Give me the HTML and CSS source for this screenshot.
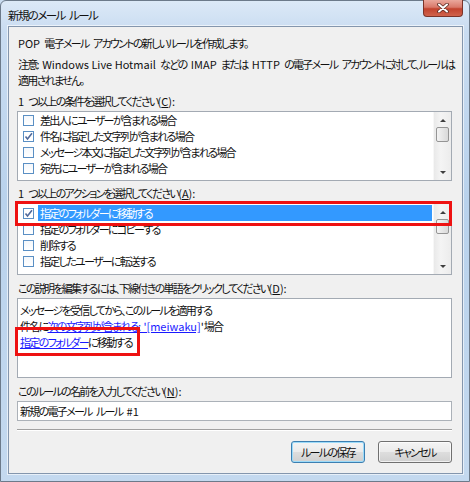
FILE: index.html
```
<html>
    <head>
        <meta charset="utf-8">
        <link rel="stylesheet" href="styles.css">
    </head>
    <body>
        <div class="window">
            <div class="titlebar">
                <span class="title">新規のメール ルール</span>
                <div class="close">
                    <svg width="12" height="10" viewBox="0 0 12 10">
                        <path d="M2 1.5 L10 8.5 M10 1.5 L2 8.5" stroke="#5a2a22" stroke-width="3.6" stroke-linecap="round"/>
                        <path d="M2 1.5 L10 8.5 M10 1.5 L2 8.5" stroke="#fff" stroke-width="2" stroke-linecap="round"/>
                    </svg>
                </div>
            </div>
            <div class="panel">
                <p class="intro"><span class="en">POP</span> 電子メール アカウントの新しいルールを作成します。</p>
                <p class="note">注意<span class="en">: Windows Live Hotmail</span> などの <span class="en">IMAP</span> または <span class="en">HTTP</span> の電子メール アカウントに対して、ルールは<br>適用されません。</p>

                <div class="label"><span class="en">1</span> つ以上の条件を選択してください<span class="en">(<u>C</u>):</span></div>
                <div class="listbox conditions">
                    <ul class="items">
                        <li><span class="check"></span><span class="text">差出人にユーザーが含まれる場合</span></li>
                        <li><span class="check checked"></span><span class="text">件名に指定した文字列が含まれる場合</span></li>
                        <li><span class="check"></span><span class="text">メッセージ本文に指定した文字列が含まれる場合</span></li>
                        <li><span class="check"></span><span class="text">宛先にユーザーが含まれる場合</span></li>
                    </ul>
                    <div class="scrollbar">
                        <span class="arrow up"></span>
                        <span class="thumb"></span>
                        <span class="arrow down"></span>
                    </div>
                </div>

                <div class="label label-action"><span class="en">1</span> つ以上のアクションを選択してください<span class="en">(<u>A</u>):</span></div>
                <div class="listbox actions">
                    <ul class="items">
                        <li class="selected"><span class="check checked"></span><span class="text">指定のフォルダーに移動する</span></li>
                        <li><span class="check"></span><span class="text">指定のフォルダーにコピーする</span></li>
                        <li><span class="check"></span><span class="text">削除する</span></li>
                        <li><span class="check"></span><span class="text">指定したユーザーに転送する</span></li>
                    </ul>
                    <div class="scrollbar">
                        <span class="arrow up"></span>
                        <span class="thumb"></span>
                        <span class="arrow down"></span>
                    </div>
                    <div class="mark mark-action"></div>
                </div>

                <div class="label">この説明を編集するには、下線付きの単語をクリックしてください<span class="en">(<u>D</u>):</span></div>
                <div class="description">
                    <div class="line">メッセージを受信してから、このルールを適用する</div>
                    <div class="line">件名に<a href="#">次の文字列が含まれる<span class="en">: '[meiwaku]</span></a><span class="en">'</span>場合</div>
                    <div class="line"><a href="#">指定のフォルダー</a>に移動する</div>
                    <div class="mark mark-folder"></div>
                </div>

                <div class="label">このルールの名前を入力してください<span class="en">(<u>N</u>):</span></div>
                <div class="input">新規の電子メール ルール <span class="en">#1</span></div>

                <div class="separator"></div>

                <div class="buttons">
                    <div class="button default">ルールの保存</div>
                    <div class="button">キャンセル</div>
                </div>
            </div>
        </div>
    </body>
</html>
```

FILE: styles.css
```
body{
    margin: 0;
    font-family: "Noto Sans CJK JP", "Noto Sans", sans-serif;
    font-size: 11px;
    letter-spacing: -1.7px;
    word-spacing: 3.5px;
    font-feature-settings: "palt";
    color: #111;
    background: #c9dcf0;
}

.en{
    font-size: 11px;
    line-height: 1;
    letter-spacing: 0;
    word-spacing: 0;
}

.window{
    box-sizing: border-box;
    width: 470px;
    height: 482px;
    border: 1px solid #6c7a8a;
    border-radius: 6px 6px 0 0;
    background: linear-gradient(180deg, #dce9f7 0px, #c9dcf1 30px, #b9d2ec 200px, #c4d9ef 482px);
    display: flex;
    flex-direction: column;
}

.titlebar{
    height: 25px;
    display: flex;
    align-items: flex-start;
    justify-content: space-between;
}

.title{
    margin: 6px 0 0 7px;
    line-height: 16px;
    font-size: 11.5px;
    letter-spacing: -1.6px;
    color: #111;
}

.close{
    width: 40px;
    height: 17px;
    margin-right: 6px;
    margin-top: -1px;
    box-sizing: border-box;
    border: 1px solid #7b3328;
    border-top: none;
    border-radius: 0 0 4px 4px;
    background: linear-gradient(180deg, #eaa89c 0%, #d9796a 45%, #c2432e 55%, #d0634c 100%);
    display: flex;
    align-items: center;
    justify-content: center;
}

.panel{
    box-sizing: border-box;
    margin: 0 6px 0 7px;
    height: 448px;
    border: 1px solid #8496ad;
    box-shadow: 0 0 0 1px rgba(255,255,255,0.6);
    background: #f0f0f0;
    padding: 8px 10px 0 8px;
    display: flex;
    flex-direction: column;
}

p{
    margin: 0;
}

.intro, .note, .label{
    line-height: 16px;
    padding-left: 1px;
    white-space: nowrap;
}

.intro, .label{
    height: 16px;
}

.note{
    height: 32px;
    margin-top: 5px;
}

.label{
    margin-top: 5px;
    margin-bottom: 2px;
}

.label-action{
    margin-top: 4px;
}

.listbox{
    position: relative;
    box-sizing: border-box;
    border: 1px solid #a3aab3;
    background: #fff;
    display: flex;
}

.conditions{
    height: 70px;
}

.actions{
    height: 72px;
}

.items{
    list-style: none;
    margin: 0;
    padding: 0 1px 0 0;
    flex-grow: 1;
}

.actions .items{
    padding-top: 1px;
}

.items li{
    height: 16px;
    display: flex;
    align-items: center;
    padding-left: 5px;
}

.check{
    box-sizing: border-box;
    width: 11px;
    height: 11px;
    border: 1px solid #5a8fc4;
    background: linear-gradient(180deg, #f4f7fb, #fff);
    margin-right: 4px;
    flex-shrink: 0;
}

.check.checked{
    background-image: url("data:image/svg+xml;utf8,<svg xmlns='http://www.w3.org/2000/svg' width='9' height='9' viewBox='0 0 9 9'><path d='M1.5 4.5 L3.5 7 L8 1.2' fill='none' stroke='%23506a9c' stroke-width='1.6'/></svg>");
    background-repeat: no-repeat;
    background-position: center;
}

.text{
    line-height: 16px;
    padding-left: 2px;
    flex-grow: 1;
}

.selected .text{
    background: #3399ff;
    color: #fff;
    height: 16px;
}

.scrollbar{
    width: 17px;
    flex-shrink: 0;
    background: linear-gradient(90deg, #e9e9e9, #f4f4f4 40%, #ececec);
    border-left: 1px solid #f7f7f7;
    display: flex;
    flex-direction: column;
    align-items: center;
}

.arrow{
    width: 0;
    height: 0;
    border-left: 3px solid transparent;
    border-right: 3px solid transparent;
}

.arrow.up{
    border-bottom: 3px solid #3e3e3e;
    margin-top: 7px;
}

.arrow.down{
    border-top: 3px solid #3e3e3e;
    margin-top: auto;
    margin-bottom: 6px;
}

.thumb{
    box-sizing: border-box;
    width: 13px;
    height: 15px;
    margin-top: 5px;
    border: 1px solid #959595;
    border-radius: 2px;
    background: linear-gradient(90deg, #f3f3f3, #e6e6e6 50%, #d9d9d9);
}

.mark{
    position: absolute;
    border: 3px solid #ee1111;
    box-sizing: border-box;
}

.mark-action{
    left: -3px;
    top: -3px;
    width: 437px;
    height: 25px;
}

.description{
    position: relative;
    box-sizing: border-box;
    height: 80px;
    border: 1px solid #a3aab3;
    background: #fff;
    padding: 3px 2px 0 2px;
    line-height: 16px;
}

.line{
    height: 16px;
}

.description a{
    color: #1a1aff;
    text-decoration: underline;
}

.mark-folder{
    left: -3px;
    top: 28px;
    width: 125px;
    height: 29px;
}

.input{
    box-sizing: border-box;
    height: 20px;
    border: 1px solid #abb1b8;
    background: #fff;
    padding: 0 2px;
    line-height: 18px;
}

.separator{
    margin-top: 8px;
    border-top: 1px solid #a0a0a0;
    border-bottom: 1px solid #fff;
}

.buttons{
    margin-top: 10px;
    display: flex;
    justify-content: flex-end;
    gap: 13px;
}

.button{
    box-sizing: border-box;
    width: 74px;
    height: 22px;
    border: 1px solid #707070;
    border-radius: 3px;
    background: linear-gradient(180deg, #f4f4f4 0%, #ebebeb 48%, #dddddd 52%, #d0d0d0 100%);
    box-shadow: inset 0 0 0 1px rgba(255,255,255,0.7);
    text-align: center;
    line-height: 20px;
}

.button.default{
    border-color: #3c7fb1;
    box-shadow: inset 0 0 0 1px #9ddbf9;
}
```
